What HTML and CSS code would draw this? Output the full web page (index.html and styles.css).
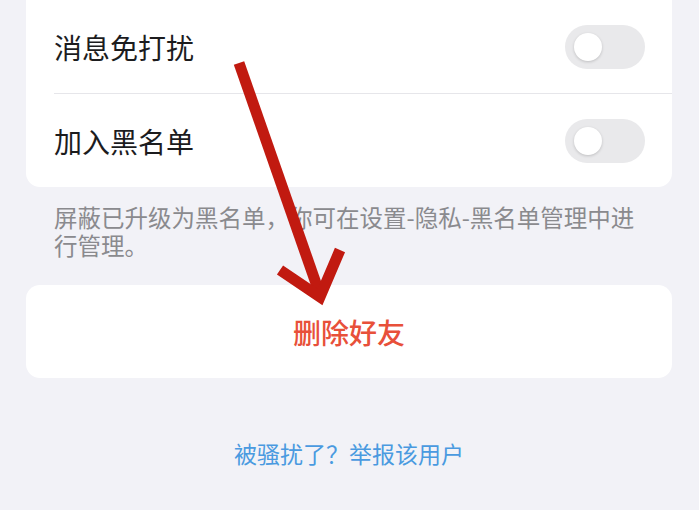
FILE: index.html
```html
<!DOCTYPE html>
<html lang="zh-CN">
<head>
<meta charset="utf-8">
<link rel="stylesheet" href="styles.css">
</head>
<body>
<div class="page">
  <div class="card card-top">
    <div class="row">
      <span class="label">消息免打扰</span>
      <span class="toggle"><span class="knob"></span></span>
    </div>
    <div class="row">
      <span class="label">加入黑名单</span>
      <span class="toggle"><span class="knob"></span></span>
    </div>
  </div>
  <p class="note">屏蔽已升级为黑名单，你可在设置-隐私-黑名单管理中进行管理。</p>
  <div class="card card-action">
    <span class="danger">删除好友</span>
  </div>
  <div class="link">被骚扰了？举报该用户</div>
</div>
<svg class="arrow" width="699" height="510" viewBox="0 0 699 510">
  <line x1="239" y1="63" x2="319" y2="292" stroke="#c11a10" stroke-width="11"/>
  <polyline points="280,270 320,297 340,250" fill="none" stroke="#c11a10" stroke-width="11" stroke-linejoin="miter" stroke-miterlimit="10"/>
</svg>
</body>
</html>
```
FILE: styles.css
```css
html, body {
  margin: 0;
  padding: 0;
  background: #f2f2f7;
  font-family: "Noto Sans CJK SC", "Noto Sans", sans-serif;
  overflow: hidden;
}
.page {
  width: 699px;
  height: 510px;
  padding: 0 27px 0 26px;
  box-sizing: border-box;
  display: flex;
  flex-direction: column;
}
.card {
  background: #ffffff;
  border-radius: 14px;
}
.card-top {
  border-radius: 0 0 14px 14px;
}
.row {
  margin-left: 28px;
  padding-right: 27px;
  height: 93px;
  display: flex;
  align-items: center;
  justify-content: space-between;
}
.row + .row {
  border-top: 1px solid #e6e6ea;
  height: 93px;
}
.label {
  font-size: 28px;
  color: #1c1c1e;
  line-height: 1;
}
.toggle {
  width: 80px;
  height: 44px;
  border-radius: 22px;
  background: #e9e9eb;
  display: flex;
  align-items: center;
  padding-left: 9px;
  box-sizing: border-box;
}
.knob {
  width: 28px;
  height: 28px;
  border-radius: 50%;
  background: #ffffff;
  box-shadow: 0 1px 3px rgba(0,0,0,0.18);
}
.note {
  margin: 16px 0 0 0;
  padding: 0 18px 0 28px;
  font-size: 23.5px;
  line-height: 28px;
  color: #8a8a8e;
}
.card-action {
  margin-top: 26px;
  height: 93px;
  display: flex;
  align-items: center;
  justify-content: center;
}
.danger {
  font-size: 28px;
  font-weight: 500;
  color: #e8503a;
}
.link {
  margin-top: 60px;
  text-align: center;
  font-size: 23px;
  line-height: 30px;
  color: #4a9ae0;
}
.arrow {
  position: absolute;
  left: 0;
  top: 0;
  pointer-events: none;
}
```
